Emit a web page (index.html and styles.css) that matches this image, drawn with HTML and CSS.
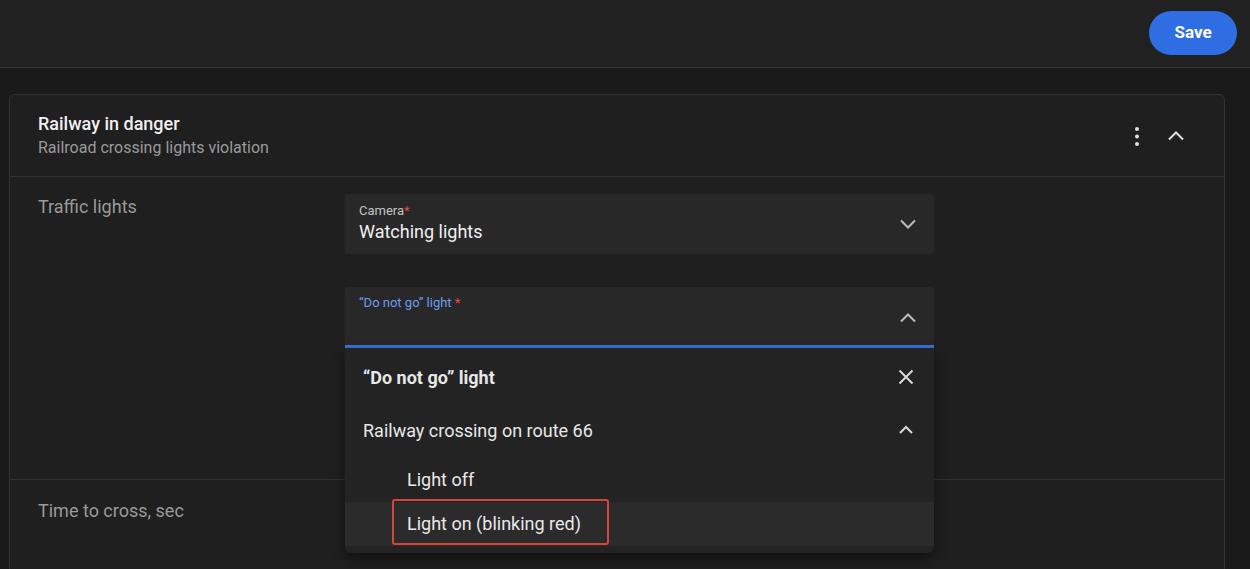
FILE: index.html
```html
<!DOCTYPE html>
<html lang="en">
<head>
<meta charset="utf-8">
<title>Railway in danger</title>
<link rel="stylesheet" href="styles.css">
</head>
<body>
<header class="topbar">
  <button class="save-btn">Save</button>
</header>
<main class="content">
  <section class="card">
    <div class="card-head">
      <div class="card-titles">
        <div class="card-title">Railway in danger</div>
        <div class="card-subtitle">Railroad crossing lights violation</div>
      </div>
      <div class="card-actions">
        <button class="icon-btn" aria-label="More">
          <svg width="24" height="24" viewBox="0 0 24 24"><circle cx="12" cy="5" r="2" fill="#e0e0e0"/><circle cx="12" cy="12.5" r="2" fill="#e0e0e0"/><circle cx="12" cy="20" r="2" fill="#e0e0e0"/></svg>
        </button>
        <button class="icon-btn" aria-label="Collapse">
          <svg width="24" height="24" viewBox="0 0 24 24"><path d="M5 15.5 L12 8.5 L19 15.5" fill="none" stroke="#e0e0e0" stroke-width="2"/></svg>
        </button>
      </div>
    </div>
    <div class="row row-lights">
      <div class="row-label">Traffic lights</div>
      <div class="fields">
        <div class="field">
          <div class="field-text">
            <div class="field-label">Camera<span class="req">*</span></div>
            <div class="field-value">Watching lights</div>
          </div>
          <svg class="field-icon" width="24" height="24" viewBox="0 0 24 24"><path d="M5 8.5 L12 15.5 L19 8.5" fill="none" stroke="#bdbdbd" stroke-width="2"/></svg>
        </div>
        <div class="field field-open">
          <div class="field-text">
            <div class="field-label label-active">“Do not go” light <span class="req">*</span></div>
            <div class="field-value"></div>
          </div>
          <svg class="field-icon" width="24" height="24" viewBox="0 0 24 24"><path d="M5 15.5 L12 8.5 L19 15.5" fill="none" stroke="#bdbdbd" stroke-width="2"/></svg>
          <div class="menu">
            <div class="menu-item menu-group">
              <span>“Do not go” light</span>
              <svg width="24" height="24" viewBox="0 0 24 24"><path d="M5.5 5.5 L18.5 18.5 M18.5 5.5 L5.5 18.5" fill="none" stroke="#d8d8d8" stroke-width="2"/></svg>
            </div>
            <div class="menu-item menu-sub">
              <span>Railway crossing on route 66</span>
              <svg width="24" height="24" viewBox="0 0 24 24"><path d="M6 15 L12 9 L18 15" fill="none" stroke="#d8d8d8" stroke-width="2"/></svg>
            </div>
            <div class="menu-item menu-option menu-first">Light off</div>
            <div class="menu-item menu-option menu-hover"><span class="marked">Light on (blinking red)</span></div>
          </div>
        </div>
      </div>
    </div>
    <div class="row row-time">
      <div class="row-label">Time to cross, sec</div>
    </div>
  </section>
</main>
</body>
</html>
```
FILE: styles.css
```css
* { box-sizing: border-box; }
html, body { margin: 0; height: 100%; }
body {
  background: #1a1a1a;
  font-family: Roboto, "Noto Sans", "Liberation Sans", sans-serif;
  color: #e8e8e8;
  overflow: hidden;
}
button { font-family: inherit; }

.topbar {
  height: 68px;
  background: #212121;
  border-bottom: 1px solid #343434;
  display: flex;
  justify-content: flex-end;
  align-items: flex-start;
  padding: 11px 13px 0 0;
}
.save-btn {
  width: 88px;
  height: 44px;
  border: none;
  border-radius: 22px;
  background: #2f6de3;
  color: #fff;
  font-size: 17px;
  font-weight: 700;
  padding: 0 0 2px;
  cursor: pointer;
}

.content {
  padding: 26px 25px 0 9px;
}
.card {
  background: #1f1f1f;
  border: 1px solid #323232;
  border-radius: 6px;
  min-height: 480px;
}
.card-head {
  height: 82px;
  display: flex;
  align-items: center;
  justify-content: space-between;
  padding: 0 36px 0 28px;
  border-bottom: 1px solid #303030;
}
.card-title {
  font-size: 18px;
  font-weight: 500;
  color: #f0f0f0;
  line-height: 22px;
}
.card-subtitle {
  font-size: 16px;
  color: #9a9a9a;
  line-height: 22px;
  margin-top: 2px;
}
.card-actions {
  display: flex;
  align-items: center;
  gap: 15px;
  margin-top: 1px;
}
.icon-btn {
  width: 24px;
  height: 24px;
  padding: 0;
  border: none;
  background: none;
  display: flex;
}

.row {
  display: grid;
  grid-template-columns: 307px 589px;
  padding-left: 28px;
}
.row-lights {
  padding-top: 17px;
  height: 303px;
  border-bottom: 1px solid #303030;
}
.row-label {
  font-size: 18px;
  color: #9a9a9a;
  line-height: 24px;
  padding-top: 1px;
}
.row-time {
  padding-top: 18px;
}

.fields {
  display: flex;
  flex-direction: column;
  gap: 33px;
}
.field {
  position: relative;
  height: 60px;
  background: #282828;
  border-radius: 4px;
  display: flex;
  align-items: center;
  justify-content: space-between;
  padding: 0 14px 0 14px;
}
.field-open {
  height: 61px;
  border-radius: 4px 4px 0 0;
  border-bottom: 3px solid #3a70db;
}
.field-text {
  align-self: flex-start;
  padding-top: 9px;
}
.field-label {
  font-size: 13px;
  color: #c4c4c4;
  line-height: 16px;
}
.label-active { color: #6e9cf2; margin-top: -1px; }
.req { color: #e24b42; }
.field-value {
  font-size: 18px;
  color: #f0f0f0;
  line-height: 24px;
  margin-top: 1px;
}
.field-open .field-icon { margin-top: 3px; }

.menu {
  position: absolute;
  left: 0;
  right: 0;
  top: calc(100% + 3px);
  background: #232323;
  border-radius: 0 0 6px 6px;
  box-shadow: 0 6px 14px rgba(0, 0, 0, 0.45);
  padding-bottom: 7px;
  z-index: 5;
}
.menu-item {
  display: flex;
  align-items: center;
  justify-content: space-between;
  font-size: 18px;
  color: #e8e8e8;
  padding: 0 16px 0 18px;
}
.menu-group {
  height: 56px;
  font-weight: 700;
  padding-top: 2px;
}
.menu-sub {
  height: 52px;
}
.menu-option {
  height: 44px;
  padding-left: 62px;
}
.menu-first { height: 46px; }
.menu-hover { background: #2b2b2b; }
.marked {
  position: relative;
  line-height: 20px;
}
.marked::before {
  content: "";
  position: absolute;
  left: -15px;
  right: -28px;
  top: -15px;
  bottom: -11px;
  border: 2px solid #d4463c;
  border-radius: 3px;
}
```
